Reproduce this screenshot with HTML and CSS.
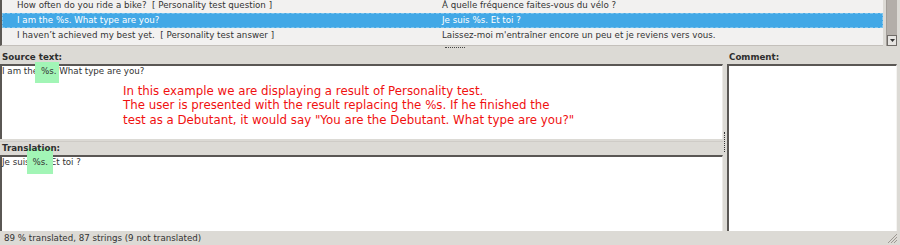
FILE: index.html
```html
<!DOCTYPE html>
<html lang="en">
<head>
    <meta charset="UTF-8">
    <title>Translation editor</title>
    <link rel="stylesheet" href="styles.css">
</head>
<body>
    <div class="window">
        <div class="list-area">
            <div class="list">
                <div class="rows">
                    <div class="row">
                        <span class="col-src">How often do you ride a bike?&nbsp; [ Personality test question ]</span>
                        <span class="col-tr">À quelle fréquence faites-vous du vélo ?</span>
                    </div>
                    <div class="row selected">
                        <span class="col-src">I am the %s. What type are you?</span>
                        <span class="col-tr">Je suis %s. Et toi ?</span>
                    </div>
                    <div class="row">
                        <span class="col-src">I haven’t achieved my best yet.&nbsp; [ Personality test answer ]</span>
                        <span class="col-tr">Laissez-moi m'entraîner encore un peu et je reviens vers vous.</span>
                    </div>
                </div>
            </div>
            <div class="scrollbar">
                <div class="scroll-btn">
                    <svg width="7" height="5" viewBox="0 0 7 5"><path d="M1 1h5L3.5 4z" fill="#333"/></svg>
                </div>
            </div>
        </div>

        <div class="hsplit"><span class="grip-h"></span></div>

        <div class="panes">
            <div class="left-pane">
                <div class="label">Source text:</div>
                <div class="textbox source">
                    <span class="line">I am the<span class="mark mark-src"><span class="mark-text"> %s. </span></span>What type are you?</span>
                    <p class="note">In this example we are displaying a result of Personality test.<br>The user is presented with the result replacing the %s. If he finished the<br>test as a Debutant, it would say "You are the Debutant. What type are you?"</p>
                </div>
                <div class="label label-tr">Translation:</div>
                <div class="textbox translation">
                    <span class="line">Je suis<span class="mark mark-tr"><span class="mark-text"> %s. </span></span>Et toi ?</span>
                </div>
            </div>
            <div class="vsplit"><span class="grip-v"></span></div>
            <div class="right-pane">
                <div class="label">Comment:</div>
                <div class="textbox comment"></div>
            </div>
        </div>

        <div class="statusbar">
            <span>89 % translated, 87 strings (9 not translated)</span>
            <svg class="resize" width="12" height="12" viewBox="0 0 12 12">
                <path d="M11 2L2 11M11 5L5 11M11 8L8 11" stroke="#9d9892" stroke-width="1"/>
            </svg>
        </div>
    </div>
</body>
</html>
```

FILE: styles.css
```css
body {
    margin: 0;
    background: #dcdad5;
    font-family: "DejaVu Sans", sans-serif;
    font-size: 8.7px;
    color: #333;
}

.window {
    width: 900px;
    height: 245px;
    display: flex;
    flex-direction: column;
    overflow: hidden;
}

/* Lista de strings */
.list-area {
    display: flex;
    height: 46px;
    padding-right: 3px;
}

.list {
    flex: 1;
    background: #f2f1f0;
    border-left: 2px solid #5c5955;
    border-bottom: 1px solid #c4c0bb;
    overflow: hidden;
}

.rows {
    margin-top: -2px;
}

.row {
    display: flex;
    height: 15px;
    line-height: 15px;
    box-sizing: border-box;
}

.row.selected {
    background: #42a8e6;
    color: #fff;
    outline: 1px dashed #7cc4ee;
    outline-offset: -1px;
}

.col-src {
    width: 425px;
    padding-left: 15px;
    white-space: nowrap;
}

.col-tr {
    white-space: nowrap;
}

.scrollbar {
    width: 10px;
    margin-left: 3px;
    background: #b3aea9;
    border-left: 1px solid #a29d98;
    display: flex;
    flex-direction: column;
    justify-content: flex-end;
}

.scroll-btn {
    height: 9px;
    background: #e6e4e1;
    border: 1px solid #6f6b67;
    display: flex;
    align-items: center;
    justify-content: center;
}

/* Divisores */
.hsplit {
    height: 6px;
    display: flex;
    justify-content: center;
}

.grip-h {
    width: 20px;
    margin-left: 10px;
    margin-top: 1px;
    height: 1px;
    border-top: 1px dotted #444;
}

.panes {
    flex: 1;
    display: flex;
}

.left-pane {
    width: 723px;
    display: flex;
    flex-direction: column;
}

.right-pane {
    width: 170px;
    display: flex;
    flex-direction: column;
}

.vsplit {
    width: 4px;
    display: flex;
    align-items: center;
    justify-content: center;
}

.grip-v {
    width: 1px;
    height: 20px;
    border-left: 1px dotted #333;
}

.label {
    position: relative;
    z-index: 2;
    height: 12px;
    line-height: 11px;
    font-weight: bold;
    padding-left: 2px;
    color: #2e2e2e;
}

.label-tr {
    margin-top: 2px;
    height: 13px;
    line-height: 13px;
    border-top: 1px solid #cfccc7;
}

.textbox {
    background: #fff;
    border-top: 2px solid #5a5754;
    border-left: 2px solid #5a5754;
    border-right: 1px solid #eceae7;
    box-sizing: border-box;
}

.source {
    height: 75px;
}

.translation {
    flex: 1;
}

.comment {
    flex: 1;
    border-right: 1px solid #f5f4f2;
}

.line {
    display: block;
    line-height: 11px;
}

/* Destaque do %s: passa por cima da borda, mas por baixo dos textos */
.mark {
    position: relative;
    white-space: pre;
}

.mark::before {
    content: "";
    position: absolute;
    left: -3px;
    right: 0;
    background: #a2f5b6;
    z-index: 1;
}

.mark-text {
    position: relative;
    z-index: 2;
}

.mark-src::before {
    top: -4px;
    height: 21px;
}

.mark-tr::before {
    top: -9px;
    height: 26px;
    right: -2px;
}

.note {
    margin: 7px 0 0 121px;
    color: #f01010;
    font-size: 11.8px;
    line-height: 14.4px;
}

/* Barra de status */
.statusbar {
    height: 14px;
    line-height: 14px;
    padding-left: 4px;
    display: flex;
    justify-content: space-between;
    align-items: center;
}

.resize {
    margin-right: 2px;
}
```
